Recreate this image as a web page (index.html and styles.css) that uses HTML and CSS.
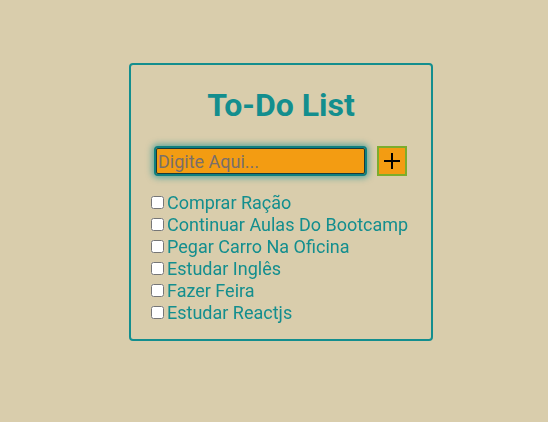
FILE: index.html
```html
<!DOCTYPE html>
<html lang="pt-BR">
<head>
<meta charset="utf-8">
<link rel="stylesheet" href="styles.css">
</head>
<body>
<div class="card">
  <h1 class="title">To-Do List</h1>
  <form class="add-row">
    <input class="task-input" type="text" placeholder="Digite Aqui..." autofocus>
    <button class="add-btn" type="button">
      <svg width="18" height="18" viewBox="0 0 18 18"><path d="M9 1v16M1 9h16" stroke="#000" stroke-width="2"/></svg>
    </button>
  </form>
  <ul class="list">
    <li class="item"><input type="checkbox" class="check"><span>Comprar Ração</span></li>
    <li class="item"><input type="checkbox" class="check"><span>Continuar Aulas Do Bootcamp</span></li>
    <li class="item"><input type="checkbox" class="check"><span>Pegar Carro Na Oficina</span></li>
    <li class="item"><input type="checkbox" class="check"><span>Estudar Inglês</span></li>
    <li class="item"><input type="checkbox" class="check"><span>Fazer Feira</span></li>
    <li class="item"><input type="checkbox" class="check"><span>Estudar Reactjs</span></li>
  </ul>
</div>
</body>
</html>
```
FILE: styles.css
```css
html, body {
  margin: 0;
  padding: 0;
  background: #d9cdac;
  font-family: Roboto, "Liberation Sans", sans-serif;
}
body {
  padding-top: 63px;
  padding-left: 129px;
  height: 422px;
  box-sizing: border-box;
}
.card {
  width: 304px;
  height: 278px;
  box-sizing: border-box;
  border: 2px solid #138e8e;
  border-radius: 4px;
  padding: 20px 0 0 20px;
}
.title {
  margin: 0;
  text-align: center;
  padding-right: 20px;
  font-size: 32px;
  font-weight: 700;
  color: #138e8e;
  line-height: 40px;
}
.add-row {
  display: flex;
  gap: 10px;
  margin: 21px 0 0 3px;
}
.task-input {
  width: 213px;
  height: 30px;
  box-sizing: border-box;
  background: #f39c12;
  border: 2px solid #0f7f7f;
  border-radius: 4px;
  outline: 1px solid #1a3a3a;
  outline-offset: -3px;
  box-shadow: 0 0 6px 2px rgba(19, 142, 142, 0.6);
  font-family: Roboto, "Liberation Sans", sans-serif;
  font-size: 18px;
  padding: 0 2px;
  color: #333;
}
.task-input::placeholder {
  color: #7a6f6a;
}
.add-btn {
  width: 30px;
  height: 30px;
  box-sizing: border-box;
  background: #f39c12;
  border: 2px solid #7cad2c;
  padding: 0;
  display: flex;
  align-items: center;
  justify-content: center;
}
.list {
  list-style: none;
  margin: 15px 0 0 0;
  padding: 0;
}
.item {
  display: flex;
  align-items: center;
  height: 22px;
  font-size: 18px;
  color: #138e8e;
}
.check {
  width: 13px;
  height: 13px;
  margin: 0 3px 0 0;
}
```
